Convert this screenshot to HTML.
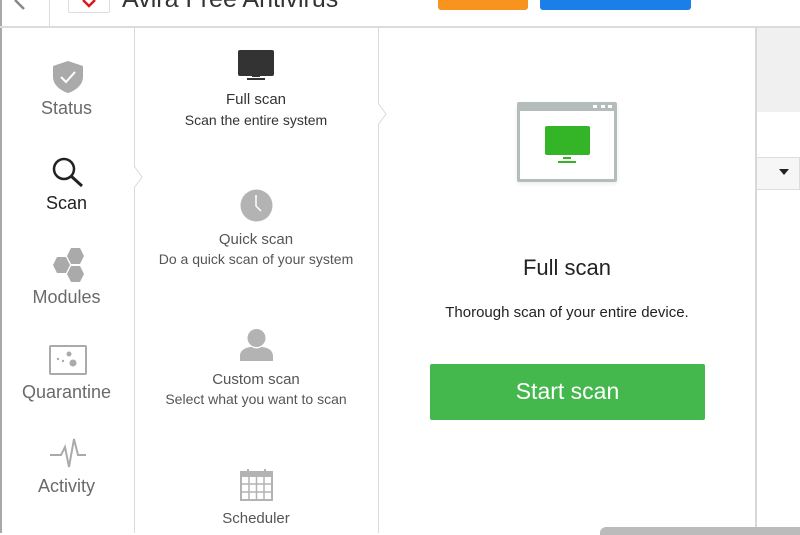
<!DOCTYPE html>
<html><head><style>
*{margin:0;padding:0;box-sizing:border-box}
body{width:800px;height:533px;overflow:hidden;background:#fff;font-family:"Liberation Sans",sans-serif;position:relative}
.a{position:absolute}
.side{color:#6a6a6a;font-size:18px;text-align:center;width:133px;left:0}
.mid{color:#555;text-align:center;width:244px;left:134px}
</style></head><body>
<div class="a" style="left:0;top:0;width:2px;height:533px;background:#a8a8a8"></div>
<div class="a" style="left:0;top:26px;width:800px;height:2px;background:#dcdcdc"></div>
<div class="a" style="left:49px;top:0;width:1px;height:26px;background:#ddd"></div>
<svg class="a" style="left:12px;top:0" width="16" height="12"><path d="M3 0 L12 9" stroke="#888" stroke-width="2.5"/></svg>
<div class="a" style="left:68px;top:-4px;width:42px;height:17px;border:1px solid #ddd;border-radius:2px;background:#fff"></div>
<svg class="a" style="left:82px;top:0" width="14" height="8"><path d="M1 0 L7 6 L13 0" stroke="#d41a1f" stroke-width="2.5" fill="none"/></svg>
<div class="a" style="left:122px;top:-15px;font-size:25px;color:#333">Avira Free Antivirus</div>
<div class="a" style="left:438px;top:-4px;width:90px;height:14px;background:#f7931e;border-radius:3px"></div>
<div class="a" style="left:540px;top:-4px;width:151px;height:14px;background:#1a7fe8;border-radius:3px"></div>
<div class="a" style="left:134px;top:28px;width:1px;height:505px;background:#dadada"></div>
<div class="a" style="left:378px;top:28px;width:1px;height:505px;background:#dadada"></div>
<div class="a" style="left:755px;top:28px;width:2px;height:505px;background:#d8d8d8"></div>
<div class="a" style="left:757px;top:28px;width:43px;height:84px;background:#f0f0f0"></div>
<div class="a" style="left:757px;top:157px;width:43px;height:33px;background:#f6f6f6;border-top:1px solid #ddd;border-bottom:1px solid #ddd;border-right:1px solid #ddd"></div>
<svg class="a" style="left:779px;top:169px" width="10" height="6"><path d="M0 0H10L5 6Z" fill="#222"/></svg>
<div class="a" style="left:600px;top:527px;width:200px;height:8px;background:#bbb;border-radius:6px 0 0 0"></div>
<svg class="a" style="left:133px;top:166px" width="10" height="22"><path d="M1 0 L9 11 L1 22" stroke="#dadada" fill="#fff"/></svg>
<svg class="a" style="left:377px;top:103px" width="10" height="22"><path d="M1 0 L9 11 L1 22" stroke="#dadada" fill="#fff"/></svg>
<svg class="a" style="left:52px;top:60px" width="32" height="34"><path d="M16 1 L31 6 V17 C31 25 23 31 16 33 C9 31 1 25 1 17 V6Z" fill="#aaa"/><path d="M9 17 L14 22 L23 12" stroke="#fff" stroke-width="2" fill="none"/></svg>
<div class="a side" style="top:98px">Status</div>
<svg class="a" style="left:51px;top:156px" width="34" height="32"><circle cx="13" cy="13" r="10" stroke="#222" stroke-width="2.5" fill="none"/><path d="M20 20 L31 30" stroke="#222" stroke-width="3"/></svg>
<div class="a side" style="top:193px;color:#222">Scan</div>
<svg class="a" style="left:51px;top:248px" width="34" height="34"><path d="M20 0 L29 0 L33 8 L29 16 L20 16 L16 8Z M6 9 L15 9 L19 17 L15 25 L6 25 L2 17Z M20 18 L29 18 L33 26 L29 34 L20 34 L16 26Z" fill="#aaa"/></svg>
<div class="a side" style="top:287px">Modules</div>
<div class="a" style="left:49px;top:345px;width:38px;height:30px;border:2px solid #aaa;border-radius:2px"></div>
<svg class="a" style="left:49px;top:345px" width="38" height="30"><circle cx="20" cy="9" r="2.5" fill="#aaa"/><circle cx="24" cy="18" r="3.5" fill="#aaa"/><circle cx="9" cy="14" r="1.2" fill="#aaa"/><circle cx="14" cy="16" r="1.2" fill="#aaa"/></svg>
<div class="a side" style="top:382px">Quarantine</div>
<svg class="a" style="left:49px;top:437px" width="38" height="34"><path d="M1 18 H12 L16 10 L20 30 L25 2 L29 18 H37" stroke="#aaa" stroke-width="2" fill="none"/></svg>
<div class="a side" style="top:476px">Activity</div>
<div class="a" style="left:238px;top:50px;width:36px;height:26px;background:#333;border-radius:2px"></div>
<div class="a" style="left:252px;top:75px;width:8px;height:2px;background:#333"></div>
<div class="a" style="left:247px;top:78px;width:18px;height:2px;background:#333"></div>
<div class="a mid" style="top:91px;font-size:15px;color:#333">Full scan</div>
<div class="a mid" style="top:112px;font-size:14px;color:#333">Scan the entire system</div>
<svg class="a" style="left:240px;top:189px" width="33" height="33"><circle cx="16.5" cy="16.5" r="16" fill="#b3b3b3"/><path d="M16 6 V17 L21 22" stroke="#fff" stroke-width="1.5" fill="none"/></svg>
<div class="a mid" style="top:231px;font-size:15px">Quick scan</div>
<div class="a mid" style="top:251px;font-size:14px">Do a quick scan of your system</div>
<svg class="a" style="left:240px;top:329px" width="33" height="32"><circle cx="16.5" cy="9" r="9" fill="#b3b3b3"/><path d="M0 32 V27 C0 21 6 18 12 18 C14 20 19 20 21 18 C27 18 33 21 33 27 V32Z" fill="#b3b3b3"/></svg>
<div class="a mid" style="top:371px;font-size:15px">Custom scan</div>
<div class="a mid" style="top:391px;font-size:14px">Select what you want to scan</div>
<svg class="a" style="left:240px;top:469px" width="33" height="32"><rect x="1" y="3" width="31" height="28" fill="none" stroke="#b3b3b3" stroke-width="2"/><rect x="1" y="3" width="31" height="5" fill="#b3b3b3"/><path d="M1 15H32M1 23H32M9 8V31M16.5 8V31M24 8V31" stroke="#b3b3b3" stroke-width="1.5"/><path d="M8 0V5M25 0V5" stroke="#b3b3b3" stroke-width="2"/></svg>
<div class="a mid" style="top:510px;font-size:15px">Scheduler</div>
<div class="a" style="left:517px;top:102px;width:100px;height:80px;border:3px solid #b5bcbc;border-top-width:9px;background:#fff;border-radius:2px;box-shadow:0 2px 4px rgba(0,0,0,.08)"></div>
<div class="a" style="left:593px;top:105px;width:4px;height:3px;background:#fff"></div>
<div class="a" style="left:601px;top:105px;width:4px;height:3px;background:#fff"></div>
<div class="a" style="left:608px;top:105px;width:4px;height:3px;background:#fff"></div>
<div class="a" style="left:545px;top:126px;width:45px;height:29px;background:#34b427;border-radius:2px"></div>
<div class="a" style="left:563px;top:157px;width:8px;height:2px;background:#34b427"></div>
<div class="a" style="left:558px;top:161px;width:18px;height:2px;background:#34b427"></div>
<div class="a" style="left:379px;top:255px;width:376px;text-align:center;font-size:22px;color:#222">Full scan</div>
<div class="a" style="left:379px;top:304px;width:376px;text-align:center;font-size:15px;color:#222">Thorough scan of your entire device.</div>
<div class="a" style="left:430px;top:364px;width:275px;height:56px;background:#45b84d;border-radius:2px;color:#fff;font-size:23px;text-align:center;line-height:54px">Start scan</div>
</body></html>
